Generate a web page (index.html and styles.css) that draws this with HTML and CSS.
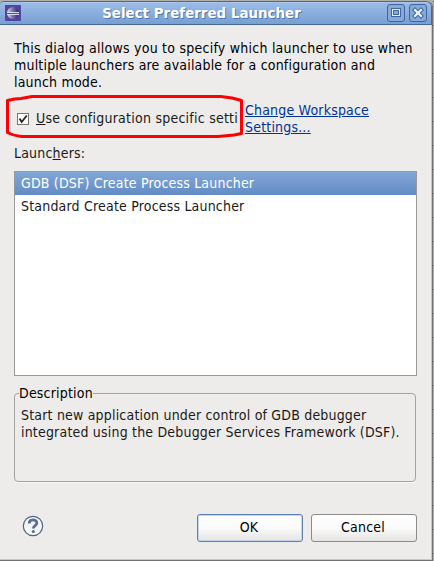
FILE: index.html
```html
<!DOCTYPE html>
<html lang="en">
<head>
<meta charset="utf-8">
<title>Select Preferred Launcher</title>
<link rel="stylesheet" href="styles.css">
</head>
<body>
<div class="desktop">
  <main class="window">
    <header class="titlebar">
      <svg class="app-icon" viewBox="0 0 16 16">
        <defs><linearGradient id="orb" x1="0" x2="1"><stop offset="0" stop-color="#e5d7de"/><stop offset=".4" stop-color="#8581b4"/><stop offset="1" stop-color="#292057"/></linearGradient></defs>
        <rect width="16" height="16" rx="1" fill="#5145a0"/>
        <circle cx="8" cy="8" r="6" fill="url(#orb)"/>
        <path d="M2 7.5h12M2 9.5h12" stroke="#d4def5"/>
        <path d="M2 8.5h12" stroke="#554c91"/>
      </svg>
      <h1 class="title">Select Preferred Launcher</h1>
      <div class="controls">
        <svg class="control" viewBox="0 0 18 18"><rect class="control-box" x=".5" y=".5" width="17" height="17" rx="2.5"/><rect x="4.5" y="4.5" width="9" height="8" fill="none" stroke="#41669b" /><rect x="5.5" y="5.5" width="7" height="6" fill="none" stroke="#e4eefb"/><rect x="6.5" y="6.5" width="5" height="4" fill="none" stroke="#41669b"/></svg>
        <svg class="control" viewBox="0 0 18 18"><rect class="control-box" x=".5" y=".5" width="17" height="17" rx="2.5"/><path d="M6 6l6 6m0-6l-6 6" stroke="#41669b" stroke-width="4.2" stroke-linecap="square"/><path d="M6 6l6 6m0-6l-6 6" stroke="#eef5ff" stroke-width="2.2" stroke-linecap="square"/></svg>
      </div>
    </header>
    <section class="content">
      <p class="intro"><span class="intro-lead">This dialog allows you to specify which launcher to use when</span><br>multiple launchers are available for a configuration and<br>launch mode.</p>
      <div class="settings">
        <label class="option">
          <svg class="check" viewBox="0 0 12 12"><rect x=".5" y=".5" width="11" height="11" fill="#fff" stroke="#777471"/><path d="M2.5 5.6L4.7 9L9.8 2.5" fill="none" stroke="#222" stroke-width="1.8"/></svg>
          <span class="option-text"><u>U</u>se configuration specific settings</span>
        </label>
        <a class="link">Change Workspace<br>Settings...</a>
        <svg class="highlight" viewBox="0 0 240 46"><path d="M2.5 6.5Q10 4.5 16 4.5L27 2.5H216L227 4L236.500 6.500V39.500L229 41L213 42.500H17Q8 41.500 2.500 38.500Z"/></svg>
      </div>
      <div class="list-label">Launc<u>h</u>ers:</div>
      <div class="list">
        <div class="row selected">GDB (DSF) Create Process Launcher</div>
        <div class="row">Standard Create Process Launcher</div>
      </div>
      <fieldset class="group">
        <legend>Description</legend>
        <p class="description">Start new application under control of GDB debugger<br>integrated using the Debugger Services Framework (DSF).</p>
      </fieldset>
      <footer class="actions">
        <svg class="help" viewBox="0 0 22 22"><circle cx="11" cy="11" r="9.7" fill="#f5f6f8" stroke="#526486" stroke-width="1.2"/><path d="M7.2 8.5C7.2 3.700 14.800 3.700 14.800 8C14.800 10.700 11.300 10.500 11.300 13.500" fill="none" stroke="#5a6f96" stroke-width="2.8"/><circle cx="11.300" cy="16.500" r="1.600" fill="#5a6f96"/></svg>
        <button class="button primary">OK</button>
        <button class="button">Cancel</button>
      </footer>
    </section>
  </main>
  <aside class="backdrop"></aside>
</div>
</body>
</html>
```
FILE: styles.css
```css
* { box-sizing: border-box; }
body {
  margin: 0;
  font: 14px/17px "DejaVu Sans Condensed", "DejaVu Sans", sans-serif;
  font-stretch: condensed;
  letter-spacing: .19px;
  color: #1a1a1a;
}
.desktop { display: flex; width: 434px; height: 561px; padding-top: 1px; background: #b0aea9; overflow: hidden; }
.window {
  width: 433px;
  height: 560px;
  background: #edeceb;
  border-right: 1px solid #74726f;
  border-bottom: 1px solid #74726f;
  border-radius: 4px 6px 0 0;
  box-shadow: inset -1px -1px #c9c7c4;
}
.backdrop {
  width: 1px;
  background: linear-gradient(#777 0 1px, transparent 1px) 0 0 / 1px 24px, #aaa8a4;
}
.titlebar {
  display: flex;
  align-items: center;
  height: 24px;
  padding: 0 4px 0 5px;
  border: 1px solid #45699c;
  border-left: 0;
  border-radius: 4px 6px 0 0;
  background: linear-gradient(#9dbde7, #789fd2);
  box-shadow: inset 0 1px #a9c7ee;
}
.app-icon { width: 16px; height: 16px; }
.title {
  flex: 1;
  margin: 2px 0 0 -5px;
  text-align: center;
  font: bold 13.33px/20px "DejaVu Sans", sans-serif;
  letter-spacing: .06px;
  color: #fff;
  text-shadow: 1px 1px #5277aa;
}
.controls { display: flex; gap: 4px; }
.control { width: 18px; height: 18px; }
.control-box { fill: #85a9da; stroke: #41669b; }
.content { padding: 15px 15px 0 14px; }
.intro { margin: 0; height: 51px; white-space: nowrap; color: #000; }
.intro-lead { letter-spacing: .24px; }
.settings { position: relative; display: flex; margin-top: 11px; height: 34px; }
.option { display: flex; align-items: center; width: 231px; padding-left: 3px; }
.check { flex: none; width: 12px; height: 12px; margin-right: 7px; }
.option-text { flex: none; width: 202px; margin-bottom: 2px; overflow: hidden; white-space: nowrap; letter-spacing: .24px; }
.link { color: #003399; text-decoration: underline; white-space: nowrap; }
.highlight { position: absolute; left: -9px; top: -8px; width: 240px; height: 46px; }
.highlight path { fill: none; stroke: #f00; stroke-width: 3; stroke-linejoin: round; }
.list-label { margin-top: 9px; height: 26px; }
.list { width: 403px; height: 205px; border: 1px solid #9c9995; background: #fff; }
.row { height: 23px; padding-left: 6px; line-height: 22px; }
.selected { color: #fff; background: linear-gradient(#82a7d9, #628cc3); }
.group {
  width: 402px;
  height: 97px;
  margin: 9px 0 0;
  padding: 5px 6px 4px;
  border: 1px solid #a4a19e;
  border-radius: 4px;
  box-shadow: 0 1px #f8f8f7;
}
.group legend { margin-left: -2px; padding: 0; color: #000; }
.description { margin: 0; white-space: nowrap; }
.actions { display: flex; align-items: center; margin-top: 32px; height: 28px; }
.help { width: 22px; height: 22px; margin: 0 auto 0 8px; position: relative; top: -2px; }
.button {
  width: 106px;
  height: 28px;
  margin-left: 8px;
  padding: 0 2px 1px 0;
  border: 1px solid #8f8b88;
  border-radius: 3px;
  background: linear-gradient(#fff, #fafafa 50%, #e5e4e2);
  font: inherit;
  letter-spacing: inherit;
  color: #000;
}
.primary { border-color: #5c82b5; box-shadow: inset 0 0 0 1px #c3d5ec; }
```
